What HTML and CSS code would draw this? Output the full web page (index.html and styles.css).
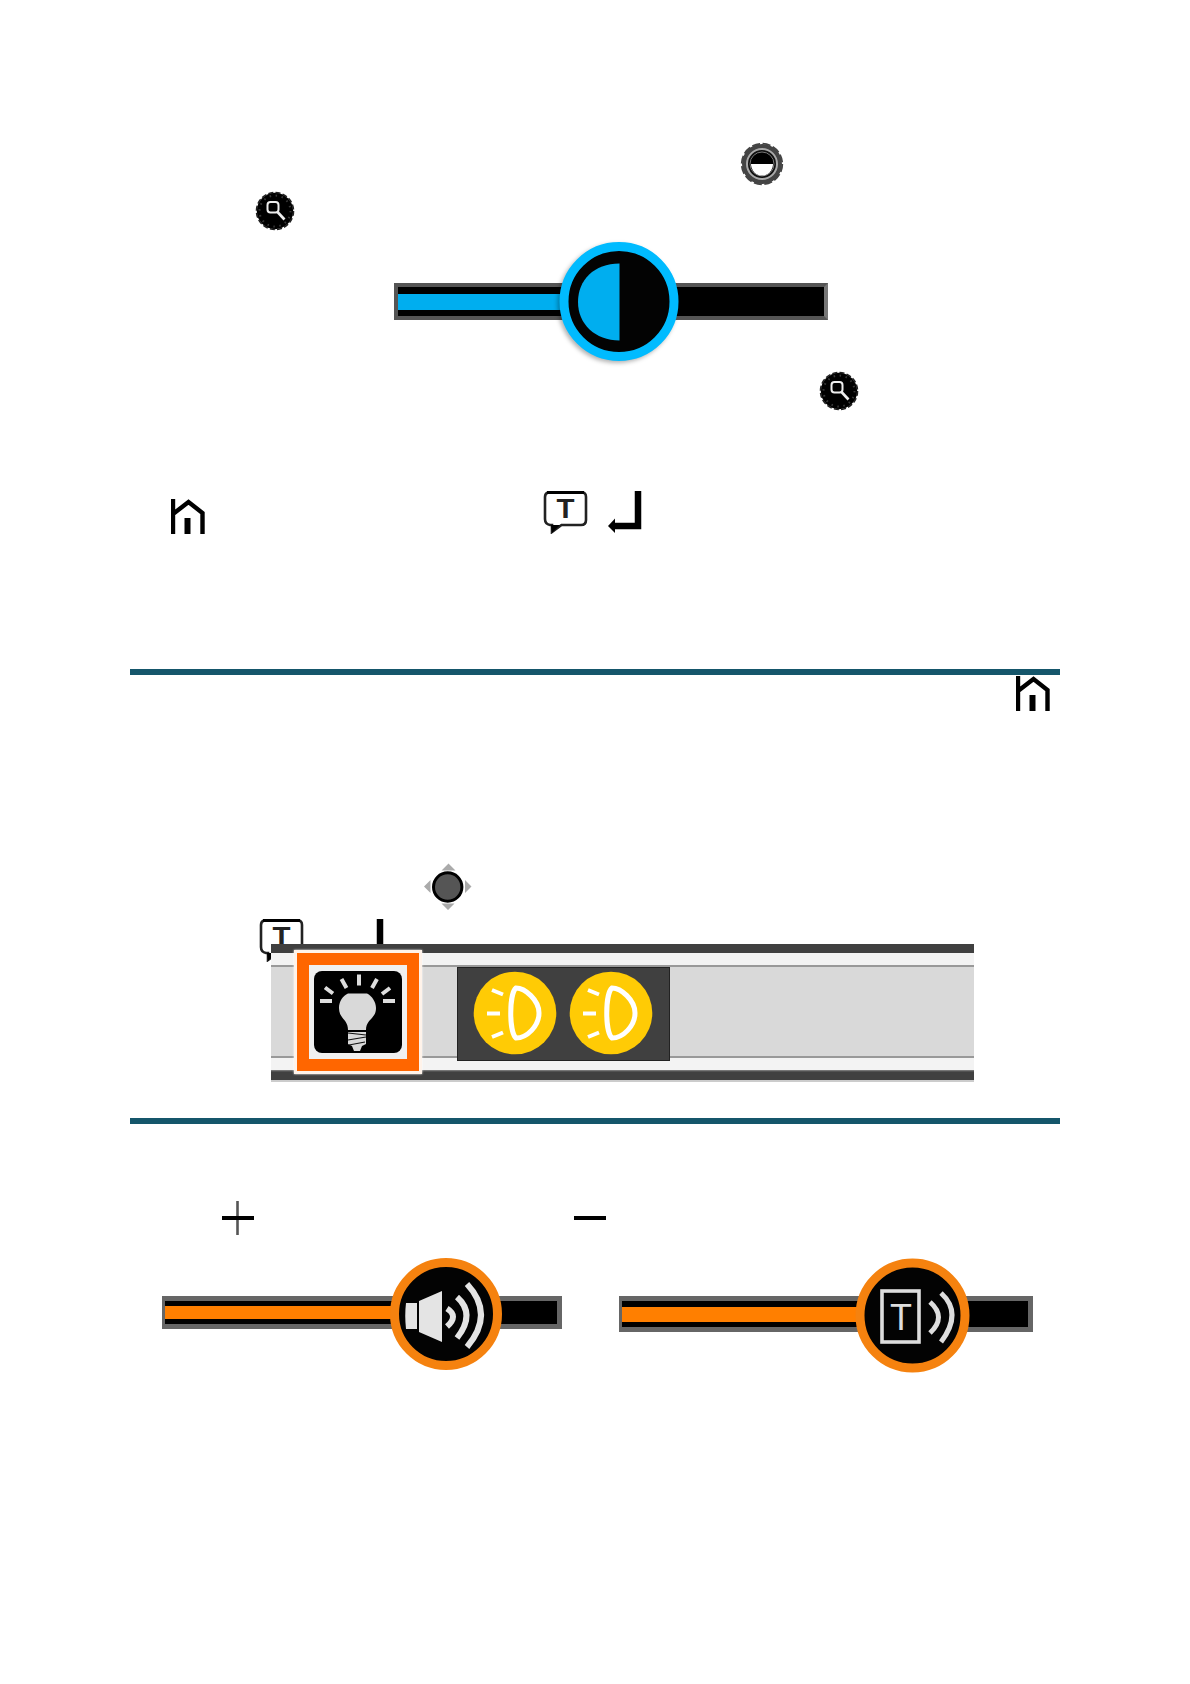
FILE: index.html
```html
<!DOCTYPE html>
<html lang="en">
<head>
    <meta charset="UTF-8">
    <meta name="viewport" content="width=device-width, initial-scale=1.0">
    <title>Quick guide</title>
    <link rel="stylesheet" href="styles.css">
</head>
<body>
    <svg class="defs">
        <symbol id="magnifier" viewBox="0 0 40 40">
            <circle cx="20" cy="20" r="18.2"/>
            <circle cx="20" cy="20" r="18.500" fill="none" stroke="#222" stroke-width="1.600" stroke-dasharray="5 2.260"/>
            <circle cx="20" cy="20" r="15.5" fill="none" stroke="#383838" stroke-width="2" stroke-dasharray="1.5 4.6"/>
            <rect x="12.5" y="11" width="11" height="10.500" rx="3" fill="#000" stroke="#eee" stroke-width="2"/>
            <path d="M22.500 21l7 7.5" stroke="#eee" stroke-width="2.6"/>
        </symbol>
        <symbol id="house" viewBox="0 0 34 36">
            <path d="M2 0v35M2 15L17.500 3L31.500 14V35" fill="none" stroke="#000" stroke-width="4.400"/>
            <path d="M16.500 19v16" stroke="#000" stroke-width="6"/>
        </symbol>
        <symbol id="enter" viewBox="0 0 34 42">
            <path d="M30 0V35H5" fill="none" stroke="#000" stroke-width="6.500"/>
            <path d="M0 35L7 27.500V42Z"/>
        </symbol>
        <symbol id="lamp" viewBox="0 0 84 84">
            <circle cx="42" cy="42" r="41.300" fill="#ffcb05"/>
            <path d="M43 17C52 17 66 29 66 42C66 55 54 67 43 67C36 61 36 23 43 17Z" fill="none" stroke="#fff" stroke-width="5"/>
            <path d="M19 19l11 4.500M14 42.500h13M19 66l11-4.500" stroke="#fff" stroke-width="4"/>
        </symbol>
    </svg>

    <div class="page">
        <div class="row row-contrast">
            <svg width="44" height="44" viewBox="0 0 44 44">
                <circle cx="22" cy="22" r="20" fill="#444"/>
                <circle cx="22" cy="22" r="20.300" fill="none" stroke="#444" stroke-width="1.800" stroke-dasharray="8 2.630"/>
                <circle cx="22" cy="22" r="15" fill="#111" stroke="#aaa" stroke-width="2"/>
                <circle cx="22" cy="22" r="12" fill="#000" stroke="#777" stroke-width="1"/>
                <path d="M11 22h22a11 11.500 0 0 1-22 0z" fill="#fff"/>
            </svg>
        </div>
        <div class="row row-zoom">
            <svg width="40" height="40"><use href="#magnifier"/></svg>
        </div>

        <div class="slider slider-blue">
            <div class="fill"></div>
            <svg class="knob" width="120" height="121" viewBox="0 0 120 121">
                <circle cx="60" cy="60.500" r="55" fill="#030303" stroke="#0bf" stroke-width="9"/>
                <path d="M60.500 22.500C35 22.500 19 39 19 61C19 83 36 99.500 60.500 99.500Z" fill="#00aeef"/>
            </svg>
        </div>

        <div class="row row-zoom-end">
            <svg width="40" height="40"><use href="#magnifier"/></svg>
        </div>

        <div class="row row-keys">
            <svg class="house" width="34" height="36"><use href="#house"/></svg>
            <svg class="bubble" width="45" height="43" viewBox="0 0 45 43">
                <path d="M5.500 1.500H39Q43 1.500 43 6V29Q43 34 38 34H18.500L9 41V34H7Q2 33 2 28V6Q2 2 5.500 1.500Z" fill="#fff" stroke="#222" stroke-width="2.600"/>
                <path d="M4 1.500H41" stroke="#000" stroke-width="3"/>
                <path d="M8 34h9l-8 8z"/>
                <text x="22.500" y="26.500" text-anchor="middle" textLength="18" lengthAdjust="spacingAndGlyphs" class="letter" font-size="27">T</text>
            </svg>
            <svg width="34" height="42"><use href="#enter"/></svg>
        </div>

        <div class="rule"></div>
        <div class="row row-home">
            <svg width="34" height="36"><use href="#house"/></svg>
        </div>

        <div class="row row-stick">
            <svg width="48" height="48" viewBox="0 0 48 48">
                <path d="M24.500 0.500l7 7h-14zM24 47l6.500-6.500h-13zM0 23.500l6.500-6.500v13zM47.500 23.500l-6.500-6.500v13z" fill="#aaa"/>
                <circle cx="23.700" cy="24" r="14.200" fill="#555" stroke="#000" stroke-width="3"/>
            </svg>
        </div>
        <div class="row row-confirm">
            <svg class="bubble" width="45" height="43" viewBox="0 0 45 43">
                <path d="M5.500 1.500H39Q43 1.500 43 6V29Q43 34 38 34H18.500L9 41V34H7Q2 33 2 28V6Q2 2 5.500 1.500Z" fill="#fff" stroke="#222" stroke-width="2.600"/>
                <path d="M4 1.500H41" stroke="#000" stroke-width="3"/>
                <path d="M8 34h9l-8 8z"/>
                <text x="22.500" y="26.500" text-anchor="middle" textLength="18" lengthAdjust="spacingAndGlyphs" class="letter" font-size="27">T</text>
            </svg>
            <svg width="34" height="42"><use href="#enter"/></svg>
        </div>

        <div class="toolbar">
            <div class="light-button">
                <svg width="88" height="82" viewBox="0 0 88 82">
                    <rect width="88" height="82" rx="8"/>
                    <path d="M6 30h12M11 16.500l8 6M27.500 8l5 9M45 3.500v11M63 8l-5 9M76 17l-8 6M69 30h12" stroke="#ddd" stroke-width="4"/>
                    <path d="M34 59C34 48 25 48 25 37C25 30 29 25 34 22.500H53C58 25 62 31 62 37C62 48 52 48 52 59Z" fill="#d9d9d9"/>
                    <path d="M34 61H52V73L48 75L46 80H40L38 75L34 73Z" fill="#d9d9d9"/>
                    <path d="M34 62l18 2M34 69l18-3M35 74l16-3" stroke="#111" stroke-width="1.200"/>
                </svg>
            </div>
            <div class="lamps">
                <svg width="84" height="84"><use href="#lamp"/></svg>
                <svg width="84" height="84"><use href="#lamp"/></svg>
            </div>
        </div>

        <div class="rule rule-second"></div>

        <div class="row row-volume">
            <svg class="plus" width="32" height="34" viewBox="0 0 32 34">
                <path d="M15.500 0v34" stroke="#555" stroke-width="2.600"/>
                <path d="M0 17h32" stroke="#000" stroke-width="4"/>
            </svg>
            <svg width="32" height="34" viewBox="0 0 32 34">
                <path d="M0 17h32" stroke="#000" stroke-width="4"/>
            </svg>
        </div>

        <div class="sliders">
            <div class="slider slider-sound">
                <div class="fill"></div>
                <svg class="knob" width="112" height="114" viewBox="0 0 112 114">
                    <circle cx="56" cy="57" r="51.500" fill="#030303" stroke="#f5820f" stroke-width="9"/>
                    <path d="M16 46q-1.500 12 0 26H27V46zM29 44L52 34V85L29 75Z" fill="#e4e4e4"/>
                    <path d="M57 51.500q12 7.500 0 18M67 40q19 17 0 41M77 27q28 30 0 63" fill="none" stroke="#e4e4e4" stroke-width="6"/>
                </svg>
            </div>
            <div class="slider slider-speech">
                <div class="fill"></div>
                <svg class="knob" width="115" height="117" viewBox="0 0 115 117">
                    <circle cx="57.500" cy="58.500" r="52.500" fill="#030303" stroke="#f5820f" stroke-width="9"/>
                    <rect x="27" y="34" width="37" height="51" fill="none" stroke="#ddd" stroke-width="3.600"/>
                    <text x="46" y="72.500" text-anchor="middle" textLength="22" lengthAdjust="spacingAndGlyphs" class="letter thin" font-size="37" fill="#ddd">T</text>
                    <path d="M75 45q17 15 0 31M86 36q22 20 0 49" fill="none" stroke="#ddd" stroke-width="5"/>
                </svg>
            </div>
        </div>
    </div>
</body>
</html>
```

FILE: styles.css
```css
* {
    box-sizing: border-box;
    margin: 0;
    padding: 0;
}

body {
    background: #fff;
    font-family: "Liberation Sans", Arial, sans-serif;
}

svg {
    display: block;
    flex-shrink: 0;
}

.defs {
    width: 0;
    height: 0;
}

.letter {
    font-family: "Liberation Sans", Arial, sans-serif;
    font-weight: bold;
    fill: #222;
}

.thin {
    font-weight: normal;
    fill: #ddd;
}

.page {
    width: 1190px;
    height: 1684px;
    padding: 142px 130px 0;
    display: flex;
    flex-direction: column;
    overflow: hidden;
}

.row {
    display: flex;
    flex-shrink: 0;
}

.row-contrast {
    height: 49px;
    padding-left: 610px;
}

.row-zoom {
    height: 92px;
    padding-left: 125px;
}

/* sliders */
.slider {
    position: relative;
    display: flex;
    align-items: center;
    flex-shrink: 0;
    background: #000;
    border: 4px solid #555;
}

.fill {
    background: #ff7f00;
    width: 60%;
}

.knob {
    position: absolute;
}

.slider-blue {
    width: 434px;
    height: 37px;
    margin-left: 264px;
    border-right-color: #777;
}

.slider-blue .fill {
    height: 16px;
    width: 170px;
    margin-top: 1px;
    background: #00aeef;
}

.slider-blue .knob {
    left: 161px;
    top: -46px;
    filter: drop-shadow(-2px 2px 2px rgba(0, 0, 0, 0.3));
}

.row-zoom-end {
    margin-top: 51px;
    height: 120px;
    padding-left: 689px;
}

.row-keys {
    height: 178px;
    padding-left: 41px;
}

.row-keys .house {
    margin-top: 8px;
    margin-right: 338px;
}

.row-keys .bubble {
    margin-right: 20px;
}

.rule {
    height: 6px;
    flex-shrink: 0;
    background: #15566b;
}

.row-home {
    height: 188px;
    padding-top: 1px;
    padding-left: 886px;
}

.row-stick {
    height: 56px;
    padding-left: 294px;
}

.row-confirm {
    height: 25px;
    padding-left: 129px;
}

.row-confirm .bubble {
    margin-right: 46px;
}

/* light bar, covers the lower half of the keys above */
.toolbar {
    position: relative;
    display: flex;
    align-items: flex-start;
    width: 703px;
    height: 138px;
    margin-left: 141px;
    flex-shrink: 0;
    padding: 6px 0 0 23px;
    background: linear-gradient(#404040 9px, #f3f3f3 9px, #f3f3f3 21px, #999 21px, #999 23px, #d9d9d9 23px, #d9d9d9 112px, #999 112px, #999 114px, #f3f3f3 114px, #f3f3f3 126px, #888 126px, #404040 128px, #404040 136px, #ccc 136px);
}

.light-button {
    display: flex;
    align-items: center;
    justify-content: center;
    width: 128px;
    height: 124px;
    background: #f0f0f0;
    border: 3px solid #fff3ea;
    outline: 12px solid #ff6600;
    outline-offset: -15px;
    box-shadow: 0 0 2px #fff;
}

.lamps {
    display: flex;
    gap: 12px;
    width: 213px;
    height: 94px;
    margin-top: 17px;
    margin-left: 35px;
    padding: 3px 0 0 15px;
    background: #404040;
    border: 1px solid #222;
}

.rule-second {
    margin-top: 36px;
}

.row-volume {
    height: 95px;
    margin-top: 77px;
    padding-left: 92px;
}

.plus {
    margin-right: 320px;
}

.sliders {
    display: flex;
    align-items: flex-start;
    gap: 57px;
    padding-left: 32px;
}

.slider-sound,
.slider-speech {
    border-color: #666;
    border-width: 5px 5px 5px 3px;
}

.slider-sound {
    width: 400px;
    height: 33px;
}

.slider-sound .fill {
    height: 13px;
}

.slider-sound .knob {
    left: 225px;
    top: -44px;
}

.slider-speech {
    width: 414px;
    height: 36px;
}

.slider-speech .fill {
    height: 15px;
}

.slider-speech .knob {
    left: 233px;
    top: -44px;
}
```
